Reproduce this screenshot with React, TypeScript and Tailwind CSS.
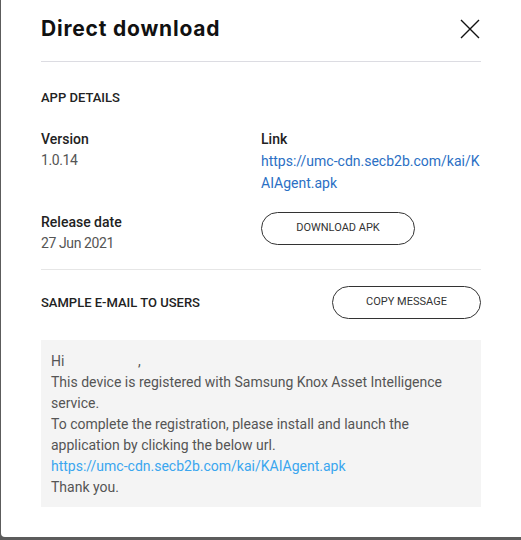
import React from 'react';

const body = { fontFamily: 'Roboto, "Liberation Sans", sans-serif' };

const App: React.FC = () => {
    return (
        <div className="w-[521px] h-[540px] overflow-hidden bg-[#5c5c5c]" style={body}>
            <div className="ml-[1px] mt-[-4px] w-[526px] h-[541px] bg-white rounded-[4px] pl-[40px] pr-[46px] pt-[4px]">
                {/* Header */}
                <div className="flex items-center justify-between h-[62px] pb-[4px] border-b border-[#dcdce2]">
                    <h1 className="text-[21px] font-bold text-[#111] tracking-[0.8px]" style={{ fontFamily: 'Inter, sans-serif' }}>
                        Direct download
                    </h1>
                    <svg width="20" height="20" viewBox="0 0 20 20" className="mr-[1px]">
                        <path d="M1 1 L19 19 M19 1 L1 19" stroke="#111" strokeWidth="1.4" fill="none" />
                    </svg>
                </div>

                {/* App details */}
                <div className="border-b border-[#e6e6e6] pb-[15px]">
                    <h2 className="text-[13px] font-medium text-[#222] mt-[27px] leading-[18px]">APP DETAILS</h2>
                    <div className="grid grid-cols-2 mt-[22px]">
                        <div>
                            <p className="text-[14px] font-medium text-[#222] leading-[21px]">Version</p>
                            <p className="text-[14px] text-[#555] leading-[21px] tracking-[-0.4px]">1.0.14</p>
                        </div>
                        <div>
                            <p className="text-[14px] font-medium text-[#222] leading-[21px]">Link</p>
                            <a className="text-[14px] text-[#2b6fc4] leading-[22px] block">
                                https://umc-cdn.secb2b.com/kai/K<br />AIAgent.apk
                            </a>
                        </div>
                        <div className="mt-[18px]">
                            <p className="text-[14px] font-medium text-[#222] leading-[21px]">Release date</p>
                            <p className="text-[14px] text-[#555] leading-[21px] tracking-[-0.4px]">27 Jun 2021</p>
                        </div>
                        <div className="mt-[18px]">
                            <button className="w-[154px] h-[33px] rounded-full border border-[#333] text-[11px] text-[#333] uppercase">
                                Download APK
                            </button>
                        </div>
                    </div>
                </div>

                {/* Sample e-mail */}
                <div className="flex items-center justify-between mt-[16px]">
                    <h2 className="text-[13px] font-medium text-[#222]">SAMPLE E-MAIL TO USERS</h2>
                    <button className="w-[149px] h-[33px] rounded-full border border-[#333] text-[11px] text-[#333] uppercase">
                        Copy message
                    </button>
                </div>
                <div className="mt-[21px] bg-[#f4f4f4] px-[10px] pt-[11px] h-[167px] text-[14px] leading-[21px] text-[#555]">
                    <p>Hi <span className="inline-block w-[70px]"></span>,</p>
                    <p>This device is registered with Samsung Knox Asset Intelligence service.</p>
                    <p>To complete the registration, please install and launch the application by clicking the below url.</p>
                    <p className="text-[#3aa6ef]">https://umc-cdn.secb2b.com/kai/KAIAgent.apk</p>
                    <p>Thank you.</p>
                </div>
            </div>
        </div>
    );
};

export default App;
